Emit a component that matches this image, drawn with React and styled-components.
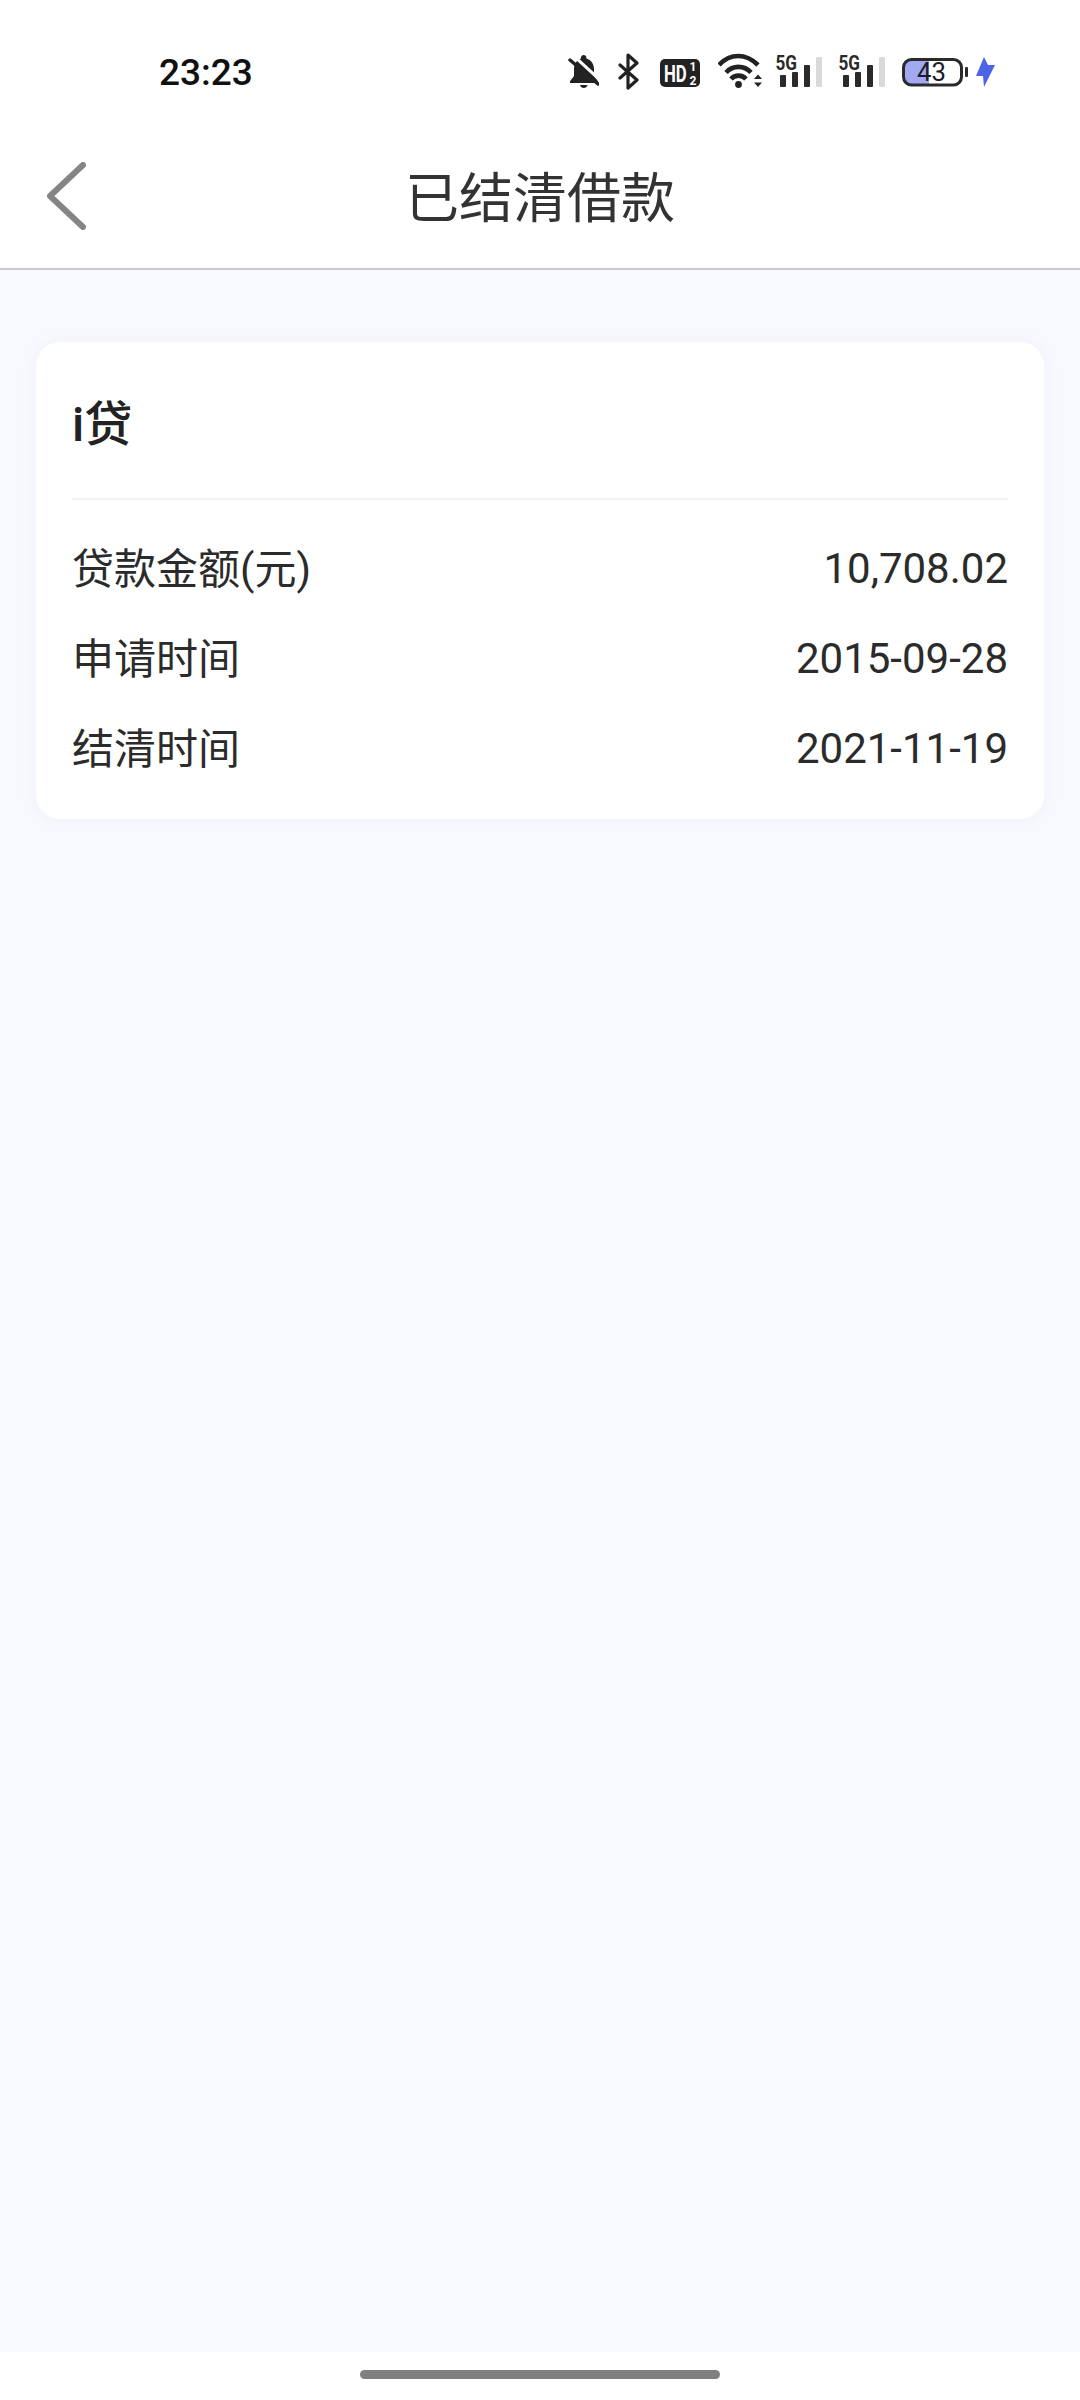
import React from "react";
import styled, { createGlobalStyle } from "styled-components";

const GlobalStyle = createGlobalStyle`
  html, body {
    margin: 0;
    padding: 0;
    background: #ffffff;
  }
  body {
    font-family: Roboto, "Noto Sans CJK SC", sans-serif;
  }
`;

const rows = [
  { label: "贷款金额(元)", value: "10,708.02" },
  { label: "申请时间", value: "2015-09-28" },
  { label: "结清时间", value: "2021-11-19" },
];

const App = () => {
  return (
    <Page>
      <GlobalStyle />
      <StatusBar>
        <Clock>23:23</Clock>
        <StatusIcons>
          <StatusIcon width="31" viewBox="568 52 31 40">
            <path
              d="M581 57.500c0-1.500 1.200-2.500 2.700-2.500s2.700 1 2.700 2.500v1c5 1.400 7.600 5.600 7.600 10.600v7l4 5.200V83h-28v-1.700l4-5.200v-7c0-5 2.700-9.200 7-10.600z"
              fill="#222"
            />
            <path d="M580 85h7.500c-.4 2-2 3-3.700 3s-3.400-1-3.800-3z" fill="#222" />
            <path d="M572 58l26 24" stroke="#fff" strokeWidth="3" transform="translate(1.800 -2.200)" />
            <path d="M570 60l28 24" stroke="#222" strokeWidth="3.400" strokeLinecap="round" />
          </StatusIcon>
          <StatusIcon $gap={19} width="21" viewBox="618 52 21 40">
            <path
              d="M620 65l17 15-9 8V55l9 8-17 15"
              fill="none"
              stroke="#222"
              strokeWidth="3.200"
              strokeLinejoin="round"
              strokeLinecap="round"
            />
          </StatusIcon>
          <StatusIcon $gap={21} width="40" viewBox="660 52 40 40">
            <rect x="660" y="59" width="40" height="28" rx="5" fill="#222" />
            <g transform="translate(664 82) scale(0.7 1)">
              <BadgeText fontSize="24">HD</BadgeText>
            </g>
            <BadgeText x="689.500" y="70.500" fontSize="12">1</BadgeText>
            <BadgeText x="689.500" y="85" fontSize="12">2</BadgeText>
          </StatusIcon>
          <StatusIcon $gap={18} width="44" viewBox="718 52 44 40">
            <g fill="none" stroke="#222" strokeWidth="4.600">
              <path d="M719 65c11-12 27-12 39 0" />
              <path d="M726 72.500c7-7.500 18-7.500 25 0" />
              <path d="M731 79c4-4.500 11-4.500 15 0" />
            </g>
            <circle cx="738.500" cy="84.500" r="3.400" fill="#222" />
            <path d="M754 79l4-4.500 4 4.500zM754 82.500h8l-4 4.500z" fill="#222" />
          </StatusIcon>
          <SignalIcon $gap={13} />
          <SignalIcon $gap={16} />
          <StatusIcon $gap={17} width="66" viewBox="902 52 66 40">
            <path d="M911 60h18v24h-18a6 6 0 0 1-6-6V66a6 6 0 0 1 6-6z" fill="#a0a9f2" />
            <rect x="903.500" y="59.500" width="58" height="25.500" rx="8" fill="none" stroke="#2a2a2a" strokeWidth="3" />
            <rect x="965" y="67" width="3" height="10" rx="1" fill="#2a2a2a" />
            <BatteryText x="917" y="81" textLength="29" lengthAdjust="spacingAndGlyphs">43</BatteryText>
          </StatusIcon>
          <StatusIcon $gap={8} width="19" viewBox="976 52 19 40">
            <path d="M984 57l-8 19h7l1 11 11-22h-7z" fill="#4f63e8" />
          </StatusIcon>
        </StatusIcons>
      </StatusBar>

      <NavBar>
        <BackIcon width="40" height="68" viewBox="0 0 40 68">
          <path
            d="M37 3L4 34l33 31"
            fill="none"
            stroke="#858585"
            strokeWidth="6"
            strokeLinecap="round"
            strokeLinejoin="round"
          />
        </BackIcon>
        <Title>已结清借款</Title>
      </NavBar>

      <Content>
        <Card>
          <CardTitle>i贷</CardTitle>
          <Rows>
            {rows.map((row) => (
              <Row key={row.label}>
                <Label>{row.label}</Label>
                <Value>{row.value}</Value>
              </Row>
            ))}
          </Rows>
        </Card>
      </Content>

      <HomeArea>
        <HomeBar />
      </HomeArea>
    </Page>
  );
};

const SignalIcon = ({ $gap }) => (
  <StatusIcon $gap={$gap} width="47" viewBox="775 52 47 40">
    <SignalText x="775.500" y="70" textLength="21.500" lengthAdjust="spacingAndGlyphs">5G</SignalText>
    <rect x="780" y="75" width="6" height="12" rx="1" fill="#2a2a2a" />
    <rect x="792" y="72" width="6" height="15" rx="1" fill="#2a2a2a" />
    <rect x="804" y="65" width="6" height="22" rx="1" fill="#2a2a2a" />
    <rect x="816" y="57" width="6" height="30" rx="1" fill="#d9d9d9" />
  </StatusIcon>
);

export default App;

const Page = styled.div`
  width: 1080px;
  height: 2400px;
  display: flex;
  flex-direction: column;
  background: #ffffff;
  overflow: hidden;
`;

const StatusBar = styled.div`
  height: 104px;
  padding: 20px 85px 0 159px;
  display: flex;
  align-items: center;
  justify-content: space-between;
`;

const Clock = styled.div`
  font-family: Roboto, sans-serif;
  font-size: 37px;
  font-weight: 500;
  color: #111111;
`;

const StatusIcons = styled.div`
  display: flex;
  align-items: center;
`;

const StatusIcon = styled.svg`
  height: 40px;
  margin-left: ${({ $gap }) => $gap || 0}px;
  flex-shrink: 0;
`;

const BadgeText = styled.text`
  font-family: Roboto, sans-serif;
  font-weight: 700;
  fill: #ffffff;
`;

const SignalText = styled.text`
  font-family: Roboto, sans-serif;
  font-size: 21px;
  font-weight: 700;
  fill: #2a2a2a;
`;

const BatteryText = styled.text`
  font-family: Roboto, sans-serif;
  font-size: 25px;
  fill: #1c1c2c;
`;

const NavBar = styled.div`
  height: 146px;
  box-sizing: border-box;
  padding-left: 46px;
  display: grid;
  grid-template-columns: 1fr auto 1fr;
  align-items: center;
  border-bottom: 2px solid #c9cacc;
`;

const BackIcon = styled.svg`
  display: block;
`;

const Title = styled.div`
  font-family: "Noto Sans CJK SC", sans-serif;
  font-size: 54px;
  font-weight: 400;
  color: #333333;
  padding-bottom: 4px;
  transform: translateX(-23px);
`;

const Content = styled.div`
  flex: 1;
  padding: 72px 36px 0;
  background: #f7f9fe;
`;

const Card = styled.div`
  background: #ffffff;
  border-radius: 24px;
  padding: 0 36px 26px;
  box-shadow: 0 0 12px rgba(225, 228, 245, 0.35);
`;

const CardTitle = styled.div`
  height: 158px;
  box-sizing: border-box;
  border-bottom: 2px solid #f3f4f6;
  display: flex;
  align-items: center;
  font-family: Roboto, "Noto Sans CJK SC", sans-serif;
  font-size: 48px;
  font-weight: 500;
  color: #222222;
`;

const Rows = styled.div`
  padding-top: 23px;
`;

const Row = styled.div`
  height: 90px;
  display: flex;
  align-items: center;
  justify-content: space-between;
`;

const Label = styled.span`
  font-family: Roboto, "Noto Sans CJK SC", sans-serif;
  font-size: 42px;
  color: #2b2b2b;
  padding-bottom: 5px;
`;

const Value = styled.span`
  font-family: Roboto, sans-serif;
  font-size: 42px;
  color: #2b2b2b;
`;

const HomeArea = styled.div`
  height: 48px;
  display: flex;
  justify-content: center;
  padding-top: 18px;
  box-sizing: border-box;
`;

const HomeBar = styled.div`
  width: 360px;
  height: 9px;
  border-radius: 5px;
  background: #808080;
`;
